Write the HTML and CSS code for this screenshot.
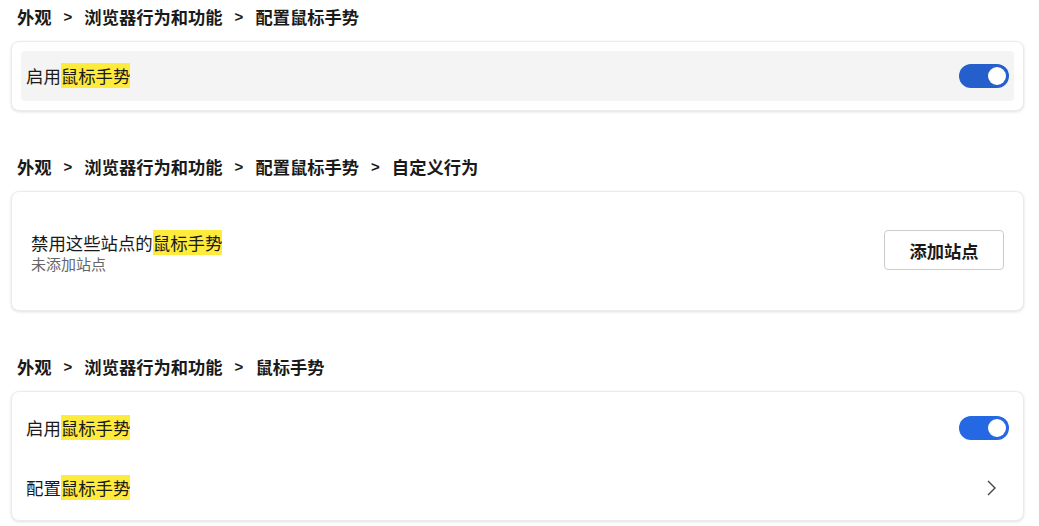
FILE: index.html
```html
<!DOCTYPE html>
<html lang="zh-CN">
<head>
    <meta charset="UTF-8">
    <meta name="viewport" content="width=device-width, initial-scale=1.0">
    <title>配置鼠标手势</title>
    <link rel="stylesheet" href="styles.css">
</head>
<body>
    <div class="page">
        <div class="section">
            <div class="crumbs">
                <span>外观</span><span class="sep">&gt;</span><span>浏览器行为和功能</span><span class="sep">&gt;</span><span>配置鼠标手势</span>
            </div>
            <div class="card card-pad">
                <div class="row row-focus">
                    <div class="label">启用<mark>鼠标手势</mark></div>
                    <div class="toggle toggle-dark"><div class="knob"></div></div>
                </div>
            </div>
        </div>

        <div class="section">
            <div class="crumbs">
                <span>外观</span><span class="sep">&gt;</span><span>浏览器行为和功能</span><span class="sep">&gt;</span><span>配置鼠标手势</span><span class="sep">&gt;</span><span>自定义行为</span>
            </div>
            <div class="card sites">
                <div class="sites-text">
                    <div class="label">禁用这些站点的<mark>鼠标手势</mark></div>
                    <div class="sub">未添加站点</div>
                </div>
                <button class="btn">添加站点</button>
            </div>
        </div>

        <div class="section">
            <div class="crumbs">
                <span>外观</span><span class="sep">&gt;</span><span>浏览器行为和功能</span><span class="sep">&gt;</span><span>鼠标手势</span>
            </div>
            <div class="card card-list">
                <div class="row">
                    <div class="label">启用<mark>鼠标手势</mark></div>
                    <div class="toggle"><div class="knob"></div></div>
                </div>
                <div class="row">
                    <div class="label">配置<mark>鼠标手势</mark></div>
                    <svg class="chevron" width="12" height="16" viewBox="0 0 12 16">
                        <path d="M3 1 L10 8 L3 15" fill="none" stroke="#444" stroke-width="1.4"/>
                    </svg>
                </div>
            </div>
        </div>
    </div>
</body>
</html>
```

FILE: styles.css
```css
body {
    margin: 0;
    font-family: "Noto Sans CJK SC", "Noto Sans", sans-serif;
    color: #1a1a1a;
    background: #fff;
}
.page {
    width: 1013px;
    padding: 4px 0 0 11px;
}
.section {
    margin-bottom: 43px;
}
.crumbs {
    display: flex;
    align-items: center;
    height: 24px;
    font-size: 17.3px;
    font-weight: bold;
    padding-left: 6px;
    margin-bottom: 13px;
}
.sep {
    font-family: "Liberation Sans", sans-serif;
    font-weight: bold;
    font-size: 15px;
    margin: 0 12px;
}
.card {
    background: #fff;
    border: 1px solid #ebebeb;
    border-radius: 8px;
    box-shadow: 0 1px 3px rgba(0, 0, 0, 0.12);
    box-sizing: border-box;
}
.card-pad {
    height: 70px;
    padding: 9px;
}
.row {
    display: flex;
    align-items: center;
    justify-content: space-between;
    height: 60px;
    padding: 0 5px;
}
.row-focus {
    height: 50px;
    background: #f4f4f4;
    border-radius: 4px;
}
.label {
    font-size: 17.4px;
    line-height: 22px;
}
mark {
    background: #ffeb3b;
    color: #1a1a1a;
}
.toggle {
    width: 50px;
    height: 24px;
    border-radius: 12px;
    background: #2468e4;
    display: flex;
    align-items: center;
    justify-content: flex-end;
    padding-right: 3px;
    box-sizing: border-box;
}
.toggle-dark {
    background: #245fcc;
}
.knob {
    width: 18px;
    height: 18px;
    border-radius: 50%;
    background: #fff;
}
.sites {
    height: 120px;
    display: flex;
    align-items: center;
    justify-content: space-between;
    padding: 0 19px;
}
.sites-text {
    margin-top: 4px;
}
.sub {
    font-size: 15px;
    line-height: 20px;
    color: #666;
}
.btn {
    width: 120px;
    height: 40px;
    background: #fff;
    border: 1px solid #cccccc;
    border-radius: 4px;
    font-family: inherit;
    font-size: 17.3px;
    font-weight: bold;
    color: #1a1a1a;
    margin-top: -2px;
}
.card-list {
    height: 130px;
    padding: 6px 9px 4px;
}
.chevron {
    margin-right: 12px;
}
```
